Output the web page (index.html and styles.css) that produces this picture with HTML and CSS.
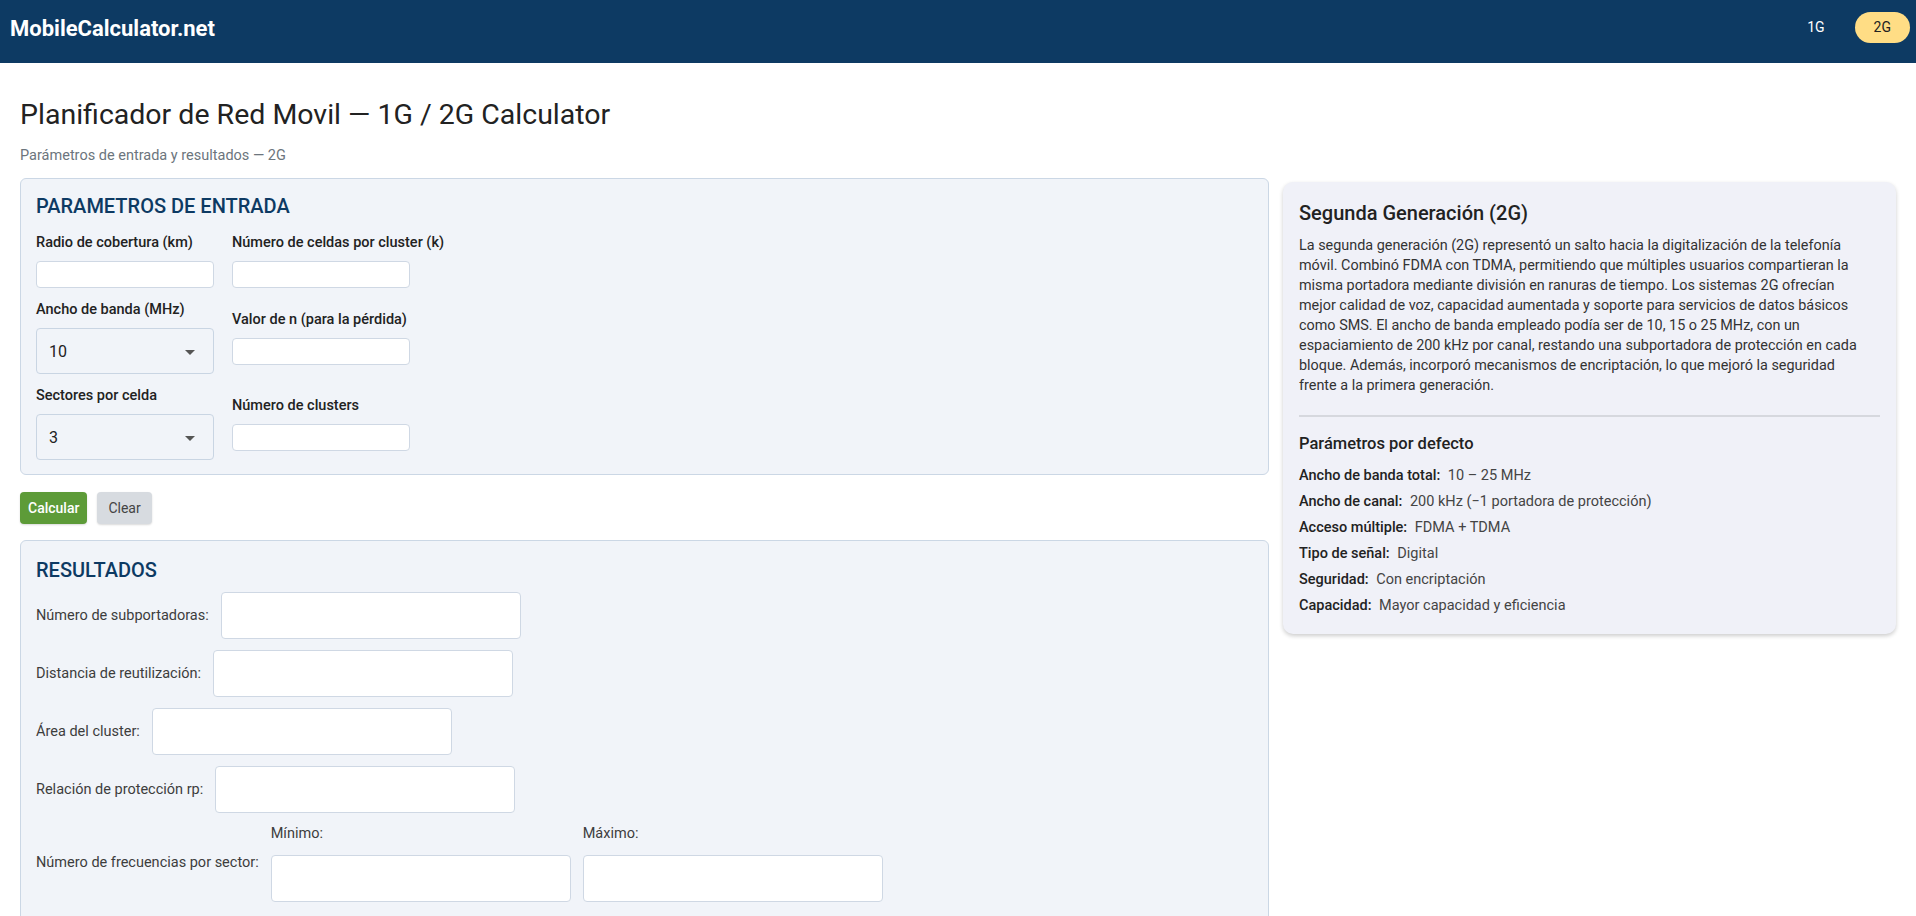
FILE: index.html
```html
<!DOCTYPE html>
<html lang="es">
<head>
<meta charset="utf-8">
<title>MobileCalculator.net — Planificador de Red Movil</title>
<link rel="stylesheet" href="styles.css">
</head>
<body>
<header class="navbar">
  <a class="brand" href="#">MobileCalculator.net</a>
  <nav class="nav">
    <a class="nav-link" href="#">1G</a>
    <a class="nav-link active" href="#">2G</a>
  </nav>
</header>

<main class="page">
  <h1 class="title">Planificador de Red Movil — 1G / 2G Calculator</h1>
  <p class="subtitle">Parámetros de entrada y resultados — 2G</p>

  <div class="layout">
    <div class="main-col">
      <section class="panel inputs-panel">
        <h2 class="panel-title">PARAMETROS DE ENTRADA</h2>

        <div class="form-row">
          <div class="field">
            <label class="field-label">Radio de cobertura (km)</label>
            <input class="input" type="text">
          </div>
          <div class="field">
            <label class="field-label">Número de celdas por cluster (k)</label>
            <input class="input" type="text">
          </div>
        </div>

        <div class="form-row">
          <div class="field">
            <label class="field-label">Ancho de banda (MHz)</label>
            <div class="select">
              <span class="select-value">10</span>
              <svg class="select-arrow" width="10" height="5" viewBox="0 0 10 5"><path d="M0 0 L10 0 L5 5 Z" fill="#555"/></svg>
            </div>
          </div>
          <div class="field">
            <label class="field-label">Valor de n (para la pérdida)</label>
            <input class="input" type="text">
          </div>
        </div>

        <div class="form-row">
          <div class="field">
            <label class="field-label">Sectores por celda</label>
            <div class="select">
              <span class="select-value">3</span>
              <svg class="select-arrow" width="10" height="5" viewBox="0 0 10 5"><path d="M0 0 L10 0 L5 5 Z" fill="#555"/></svg>
            </div>
          </div>
          <div class="field">
            <label class="field-label">Número de clusters</label>
            <input class="input" type="text">
          </div>
        </div>
      </section>

      <div class="actions">
        <button class="btn btn-primary" type="button">Calcular</button>
        <button class="btn btn-secondary" type="button">Clear</button>
      </div>

      <section class="panel results-panel">
        <h2 class="panel-title results-title">RESULTADOS</h2>

        <div class="result-row">
          <span class="result-label">Número de subportadoras:</span>
          <input class="input result-input" type="text">
        </div>
        <div class="result-row">
          <span class="result-label">Distancia de reutilización:</span>
          <input class="input result-input" type="text">
        </div>
        <div class="result-row">
          <span class="result-label">Área del cluster:</span>
          <input class="input result-input" type="text">
        </div>
        <div class="result-row">
          <span class="result-label">Relación de protección rp:</span>
          <input class="input result-input" type="text">
        </div>
        <div class="result-row">
          <span class="result-label">Número de frecuencias por sector:</span>
          <div class="range-field">
            <span class="range-label">Mínimo:</span>
            <input class="input result-input" type="text">
          </div>
          <div class="range-field">
            <span class="range-label">Máximo:</span>
            <input class="input result-input" type="text">
          </div>
        </div>
      </section>
    </div>

    <aside class="info-card">
      <h2 class="info-title">Segunda Generación (2G)</h2>
      <p class="info-text">La segunda generación (2G) representó un salto hacia la digitalización de la telefonía<br>
móvil. Combinó FDMA con TDMA, permitiendo que múltiples usuarios compartieran la<br>
misma portadora mediante división en ranuras de tiempo. Los sistemas 2G ofrecían<br>
mejor calidad de voz, capacidad aumentada y soporte para servicios de datos básicos<br>
como SMS. El ancho de banda empleado podía ser de 10, 15 o 25 MHz, con un<br>
espaciamiento de 200 kHz por canal, restando una subportadora de protección en cada<br>
bloque. Además, incorporó mecanismos de encriptación, lo que mejoró la seguridad<br>
frente a la primera generación.</p>
      <hr class="info-divider">
      <h3 class="info-subtitle">Parámetros por defecto</h3>
      <ul class="info-list">
        <li><strong>Ancho de banda total:</strong> 10 – 25 MHz</li>
        <li><strong>Ancho de canal:</strong> 200 kHz (−1 portadora de protección)</li>
        <li><strong>Acceso múltiple:</strong> FDMA + TDMA</li>
        <li><strong>Tipo de señal:</strong> Digital</li>
        <li><strong>Seguridad:</strong> Con encriptación</li>
        <li><strong>Capacidad:</strong> Mayor capacidad y eficiencia</li>
      </ul>
    </aside>
  </div>
</main>
</body>
</html>
```

FILE: styles.css
```css
* {
  box-sizing: border-box;
}

body {
  margin: 0;
  font-family: Roboto, "Liberation Sans", Arial, sans-serif;
  color: #222;
  background: #fff;
}

/* Navbar */
.navbar {
  height: 63px;
  background: #0d3a63;
  display: flex;
  align-items: center;
  justify-content: space-between;
  padding: 0 6px 0 10px;
}

.brand {
  color: #fff;
  font-size: 22px;
  font-weight: 700;
  text-decoration: none;
  margin-bottom: 6px;
}

.nav {
  display: flex;
  gap: 11px;
  margin-bottom: 8px;
}

.nav-link {
  display: block;
  height: 31px;
  line-height: 31px;
  padding: 0 19px;
  border-radius: 16px;
  color: #fff;
  font-size: 14px;
  text-decoration: none;
}

.nav-link.active {
  background: #ffdd85;
  color: #222;
}

/* Page */
.page {
  padding: 0 20px;
}

.title {
  margin: 35px 0 0;
  font-size: 28.5px;
  font-weight: 400;
  line-height: 34px;
  color: #222;
}

.subtitle {
  margin: 14px 0 12px;
  font-size: 14.5px;
  line-height: 20px;
  color: #6c757d;
}

.layout {
  display: grid;
  grid-template-columns: minmax(0, 1249fr) minmax(0, 613fr);
  column-gap: 14px;
  align-items: start;
}

/* Panels */
.panel {
  background: #f1f4f9;
  border: 1px solid #cbd7e5;
  border-radius: 6px;
}

.inputs-panel {
  padding: 15px 15px 14px;
}

.panel-title {
  margin: 0 0 15px;
  font-size: 20px;
  line-height: 24px;
  font-weight: 500;
  color: #0d3a63;
}

.form-row {
  display: flex;
  align-items: center;
  gap: 18px;
  margin-bottom: 12px;
}

.form-row:last-child {
  margin-bottom: 0;
}

.field {
  width: 178px;
}

.field-label {
  display: block;
  margin-bottom: 8px;
  font-size: 14.5px;
  line-height: 20px;
  font-weight: 500;
  color: #222;
  white-space: nowrap;
}

.input {
  display: block;
  width: 178px;
  height: 27px;
  background: #fff;
  border: 1px solid #cfd8e4;
  border-radius: 4px;
  font-family: inherit;
  font-size: 14px;
  padding: 0 8px;
}

.select {
  position: relative;
  display: flex;
  align-items: center;
  height: 46px;
  border: 1px solid #c9d5e3;
  border-radius: 4px;
  padding: 0 12px;
}

.select-value {
  font-size: 16px;
  color: #222;
}

.select-arrow {
  position: absolute;
  right: 18px;
  top: 21px;
}

/* Buttons */
.actions {
  display: flex;
  gap: 10px;
  margin: 17px 0 16px;
}

.btn {
  height: 32px;
  border: none;
  border-radius: 4px;
  font-family: inherit;
  font-size: 14px;
  padding: 0 8px;
  box-shadow: 0 1px 2px rgba(0, 0, 0, 0.15);
}

.btn-primary {
  background: #5d9b38;
  color: #fff;
  font-weight: 500;
}

.btn-secondary {
  background: #d7dbe0;
  color: #444;
  padding: 0 11px;
}

/* Results */
.results-panel {
  padding: 17px 15px 40px;
}

.results-title {
  margin-bottom: 10px;
}

.result-row {
  display: flex;
  align-items: center;
  gap: 12px;
  margin-bottom: 11px;
}

.result-label {
  font-size: 14.5px;
  line-height: 20px;
  color: #3d3d3d;
}

.result-input {
  width: 300px;
  height: 47px;
}

.range-field {
  display: flex;
  flex-direction: column;
}

.range-label {
  font-size: 14.5px;
  line-height: 20px;
  color: #3d3d3d;
  margin-bottom: 11px;
}

/* Info card */
.info-card {
  margin-top: 4px;
  background: #f0f1f8;
  border-radius: 10px;
  padding: 19px 16px 18px;
  box-shadow: 0 2px 4px rgba(0, 0, 0, 0.2);
}

.info-title {
  margin: 0 0 11px;
  font-size: 20px;
  line-height: 24px;
  font-weight: 500;
  color: #222;
}

.info-text {
  margin: 0;
  font-size: 14.4px;
  line-height: 20px;
  color: #333;
}

.info-divider {
  margin: 19px 0 15px;
  border: none;
  height: 2px;
  background: #d6d8de;
}

.info-subtitle {
  margin: 0 0 10px;
  font-size: 16.5px;
  line-height: 24px;
  font-weight: 500;
  color: #222;
}

.info-list {
  list-style: none;
  margin: 0;
  padding: 0;
}

.info-list li {
  font-size: 14.5px;
  line-height: 20px;
  color: #444;
  margin-bottom: 6px;
}

.info-list li:last-child {
  margin-bottom: 0;
}

.info-list strong {
  font-weight: 500;
  color: #222;
  margin-right: 4px;
}
```
